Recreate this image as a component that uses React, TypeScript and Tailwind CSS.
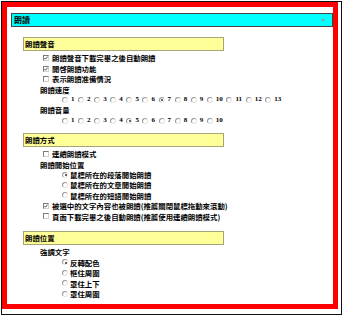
import React from "react";

function Radio({ checked = false }: { checked?: boolean }) {
  return (
    <span className="relative inline-block w-[6px] h-[6px] shrink-0 rounded-full border border-t-[#9a9a9a] border-l-[#9a9a9a] border-b-[#e6e6e6] border-r-[#e6e6e6] bg-white">
      {checked && (
        <span className="absolute left-[1.5px] top-[1.5px] w-[2px] h-[2px] rounded-full bg-[#333]" />
      )}
    </span>
  );
}

function Checkbox({ checked = false }: { checked?: boolean }) {
  return (
    <span className="relative inline-block w-[6px] h-[6px] shrink-0 border border-t-[#7a7a7a] border-l-[#7a7a7a] border-b-[#d0d0d0] border-r-[#d0d0d0] bg-white">
      {checked && (
        <svg className="absolute left-0 top-0" width="4" height="4" viewBox="0 0 4 4">
          <path d="M0.4 2 L1.5 3.2 L3.6 0.6" fill="none" stroke="#222" strokeWidth="0.8" />
        </svg>
      )}
    </span>
  );
}

function CheckRow({ checked, text }: { checked?: boolean; text: string }) {
  return (
    <div className="h-[10.4px] flex items-center pl-[20px] gap-[3px]">
      <Checkbox checked={checked} />
      <span className="whitespace-nowrap">{text}</span>
    </div>
  );
}

function Label({ text }: { text: string }) {
  return (
    <div className="h-[10.4px] flex items-center pl-[17px]">
      <span className="whitespace-nowrap">{text}</span>
    </div>
  );
}

function RadioOption({ checked, text }: { checked?: boolean; text: string }) {
  return (
    <div className="h-[10.4px] flex items-center pl-[39px] gap-[2px]">
      <Radio checked={checked} />
      <span className="whitespace-nowrap">{text}</span>
    </div>
  );
}

function NumberRow({ count, selected }: { count: number; selected: number }) {
  const nums = Array.from({ length: count }, (_, i) => i + 1);
  return (
    <div className="h-[10.4px] flex items-center pl-[39px]">
      {nums.map((n) => (
        <span key={n} className="flex items-center mr-[3.6px]">
          <Radio checked={n === selected} />
          <span className="ml-[3px] font-['Liberation_Serif',serif] font-bold text-[7px] leading-none">
            {n}
          </span>
        </span>
      ))}
    </div>
  );
}

function SectionHeader({ text }: { text: string }) {
  return (
    <div className="w-[201px] h-[14px] bg-[#ffff99] border border-[#a5a57a] flex items-center pl-[1px]">
      <span className="whitespace-nowrap">{text}</span>
    </div>
  );
}

export default function App() {
  return (
    <div className="w-[346px] h-[317px] bg-white overflow-hidden font-['Noto_Sans_CJK_TC',sans-serif] text-[7.4px] leading-none font-bold text-black">
      <div className="ml-[1px] mt-[1px] w-[341px] h-[314px] border border-[#111]">
        <div className="w-[336px] h-[307px] border-[5px] border-[#ff0000]">
          <div className="ml-[4px] mt-[6px] w-[322px] h-[14px] bg-[#00ffff] border border-[#444] flex items-center justify-between pl-[2px] pr-[7px]">
            <span className="text-[8px]">朗讀</span>
            <svg width="4" height="4" viewBox="0 0 4 4">
              <path d="M0 1 L4 1 L2 3.5 Z" fill="#8a9a9a" />
            </svg>
          </div>

          <div className="ml-[16px] mt-[10px]">
            <SectionHeader text="朗讀聲音" />
            <div className="mt-[2px]">
              <CheckRow checked text="朗讀聲音下載完畢之後自動朗讀" />
              <CheckRow checked text="開啓朗讀功能" />
              <CheckRow text="表示朗讀准備情況" />
              <Label text="朗讀速度" />
              <NumberRow count={13} selected={7} />
              <Label text="朗讀音量" />
              <NumberRow count={10} selected={5} />
            </div>
          </div>

          <div className="ml-[16px] mt-[7px]">
            <SectionHeader text="朗讀方式" />
            <div className="mt-[2px]">
              <CheckRow text="連續朗讀模式" />
              <Label text="朗讀開始位置" />
              <RadioOption checked text="鼠標所在的段落開始朗讀" />
              <RadioOption text="鼠標所在的文章開始朗讀" />
              <RadioOption text="鼠標所在的短語開始朗讀" />
              <CheckRow checked text="被選中的文字內容也被朗讀(推薦關閉鼠標拖動來滾動)" />
              <CheckRow text="頁面下載完畢之後自動朗讀(推薦使用連續朗讀模式)" />
            </div>
          </div>

          <div className="ml-[16px] mt-[9.4px]">
            <SectionHeader text="朗讀位置" />
            <div className="mt-[2px]">
              <Label text="強調文字" />
              <RadioOption checked text="反轉配色" />
              <RadioOption text="框住周圍" />
              <RadioOption text="罩住上下" />
              <RadioOption text="罩住周圍" />
            </div>
          </div>
        </div>
      </div>
    </div>
  );
}
